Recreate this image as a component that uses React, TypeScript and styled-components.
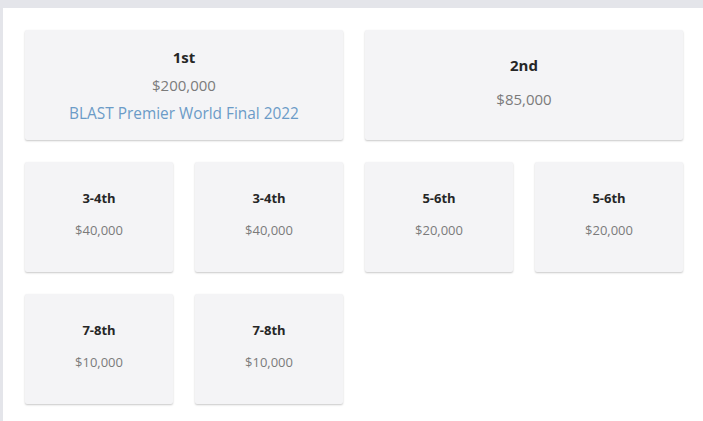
import React from "react";
import styled, { createGlobalStyle } from "styled-components";

const GlobalStyle = createGlobalStyle`
  html, body {
    margin: 0;
    padding: 0;
    background: #e4e5ea;
    font-family: "Open Sans", "Liberation Sans", sans-serif;
    overflow: hidden;
  }
`;

const Page = styled.div`
  margin: 8px 0 0 3px;
  min-height: 413px;
  background: #ffffff;
  padding: 22px;
  box-sizing: border-box;
`;

const PrizeGrid = styled.div`
  display: grid;
  grid-template-columns: repeat(4, 148px);
  grid-auto-rows: 110px;
  gap: 22px;
`;

const Card = styled.div<{ $wide?: boolean }>`
  grid-column: span ${(props) => (props.$wide ? 2 : 1)};
  background: #f4f4f6;
  box-shadow: 0 1px 2px rgba(0, 0, 0, 0.22);
  border-radius: 2px;
  display: flex;
  flex-direction: column;
  align-items: center;
  justify-content: center;
  gap: 12px;
  padding-bottom: 6px;
  box-sizing: border-box;
  text-align: center;
`;

const FeaturedCard = styled(Card)`
  gap: 0;
  padding-bottom: 0;
  padding-top: 2px;
`;

const Place = styled.div<{ $small?: boolean; $tight?: boolean }>`
  font-weight: 700;
  font-size: ${(props) => (props.$small ? 13 : 15)}px;
  line-height: ${(props) => (props.$tight ? 28 : props.$small ? 20 : 22)}px;
  color: #262626;
`;

const Amount = styled.div<{ $small?: boolean; $tight?: boolean }>`
  font-size: ${(props) => (props.$small ? 13 : 15)}px;
  line-height: ${(props) => (props.$tight ? 28 : props.$small ? 20 : 22)}px;
  color: #7b7b7b;
`;

const EventLink = styled.a`
  font-size: 15.4px;
  line-height: 30px;
  color: #6b9bc7;
  text-decoration: none;
`;

const smallPrizes = [
  { place: "3-4th", amount: "$40,000" },
  { place: "3-4th", amount: "$40,000" },
  { place: "5-6th", amount: "$20,000" },
  { place: "5-6th", amount: "$20,000" },
  { place: "7-8th", amount: "$10,000" },
  { place: "7-8th", amount: "$10,000" },
];

const App = () => (
  <>
    <GlobalStyle />
    <Page>
      <PrizeGrid>
        <FeaturedCard $wide>
          <Place $tight>1st</Place>
          <Amount $tight>$200,000</Amount>
          <EventLink href="#">BLAST Premier World Final 2022</EventLink>
        </FeaturedCard>
        <Card $wide>
          <Place>2nd</Place>
          <Amount>$85,000</Amount>
        </Card>
        {smallPrizes.map((prize, index) => (
          <Card key={index}>
            <Place $small>{prize.place}</Place>
            <Amount $small>{prize.amount}</Amount>
          </Card>
        ))}
      </PrizeGrid>
    </Page>
  </>
);

export default App;
